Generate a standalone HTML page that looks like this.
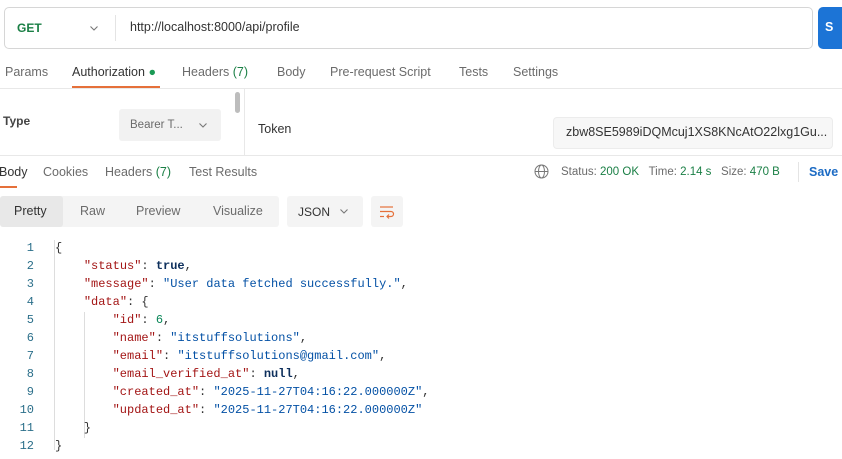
<!DOCTYPE html>
<html><head><meta charset="utf-8"><style>
*{margin:0;padding:0;box-sizing:border-box}
body{width:842px;height:459px;overflow:hidden;background:#fff;font-family:"Liberation Sans",sans-serif;font-size:12.5px;color:#212121;position:relative}
.a{position:absolute;white-space:nowrap}
.g{color:#6b6b6b}
.mono{font-family:"Liberation Mono",monospace;font-size:12px}
.k{color:#a31515}.s{color:#0451a5}.b{color:#0d2f5c;font-weight:bold}.n{color:#098658}
.ln{color:#2b6f8a;text-align:right;width:34px;left:0}
</style></head><body>
<div class="a" style="left:4px;top:7px;width:809px;height:42px;border:1px solid #d6d6d6;border-radius:5px"></div>
<div class="a" style="left:17px;top:21px;color:#1a7f45;font-weight:bold;font-size:12px">GET</div>
<svg class="a" style="left:89px;top:24px" width="10" height="8" viewBox="0 0 10 8" fill="none" stroke="#777" stroke-width="1.1"><path d="M1.5 2.5l3.5 3.5 3.5-3.5"/></svg>
<div class="a" style="left:115px;top:15px;width:1px;height:26px;background:#e4e4e4"></div>
<div class="a" style="left:130px;top:20px;color:#333">http://localhost:8000/api/profile</div>
<div class="a" style="left:818px;top:7px;width:40px;height:42px;background:#1c74d6;border-radius:5px;color:#fff;font-weight:bold;padding:13px 0 0 7px">S</div>
<div class="a g" style="left:5px;top:65px">Params</div>
<div class="a" style="left:72px;top:65px;color:#333">Authorization <span style="color:#1a9a55">●</span></div>
<div class="a" style="left:72px;top:86px;width:88px;height:2px;background:#e5703a"></div>
<div class="a g" style="left:182px;top:65px">Headers <span style="color:#1a7f45">(7)</span></div>
<div class="a g" style="left:277px;top:65px">Body</div>
<div class="a g" style="left:330px;top:65px">Pre-request Script</div>
<div class="a g" style="left:459px;top:65px">Tests</div>
<div class="a g" style="left:513px;top:65px">Settings</div>
<div class="a" style="left:0;top:88px;width:842px;height:1px;background:#e8e8e8"></div>
<div class="a" style="left:3px;top:114px;color:#444;font-weight:bold;font-size:12px">Type</div>
<div class="a" style="left:119px;top:109px;width:102px;height:32px;background:#f2f2f2;border-radius:3px"></div>
<div class="a g" style="left:130px;top:119px;font-size:11.5px">Bearer T...</div>
<svg class="a" style="left:198px;top:121px" width="10" height="8" viewBox="0 0 10 8" fill="none" stroke="#777" stroke-width="1.1"><path d="M1.5 2.5l3.5 3.5 3.5-3.5"/></svg>
<div class="a" style="left:235px;top:92px;width:5px;height:21px;background:#bdbdbd;border-radius:3px"></div>
<div class="a" style="left:244px;top:89px;width:1px;height:67px;background:#e8e8e8"></div>
<div class="a" style="left:258px;top:122px;color:#333">Token</div>
<div class="a" style="left:553px;top:117px;width:280px;height:32px;background:#f7f7f7;border:1px solid #ececec;border-radius:4px"></div>
<div class="a" style="left:566px;top:125px;color:#333">zbw8SE5989iDQMcuj1XS8KNcAtO22lxg1Gu...</div>
<div class="a" style="left:0;top:155px;width:842px;height:1px;background:#e8e8e8"></div>
<div class="a" style="left:-1px;top:165px;color:#333">Body</div>
<div class="a" style="left:0;top:186px;width:17px;height:2px;background:#e5703a"></div>
<div class="a g" style="left:43px;top:165px">Cookies</div>
<div class="a g" style="left:105px;top:165px">Headers <span style="color:#1a7f45">(7)</span></div>
<div class="a g" style="left:189px;top:165px">Test Results</div>
<svg class="a" style="left:534px;top:164px" width="15" height="15" viewBox="0 0 15 15" fill="none" stroke="#777" stroke-width="1"><circle cx="7.5" cy="7.5" r="6.5"/><ellipse cx="7.5" cy="7.5" rx="3" ry="6.5"/><line x1="1" y1="7.5" x2="14" y2="7.5"/></svg>
<div class="a g" style="left:561px;top:166px;font-size:11.5px">Status: <span style="color:#1a7f45">200 OK</span> &nbsp;&nbsp;Time: <span style="color:#1a7f45">2.14 s</span> &nbsp;&nbsp;Size: <span style="color:#1a7f45">470 B</span></div>
<div class="a" style="left:798px;top:162px;width:1px;height:20px;background:#e4e4e4"></div>
<div class="a" style="left:809px;top:165px;color:#1c6bc4;font-weight:bold">Save R</div>
<div class="a" style="left:0;top:196px;width:279px;height:31px;background:#f4f4f4;border-radius:3px"></div>
<div class="a" style="left:0;top:196px;width:63px;height:31px;background:#e8e8e8;border-radius:3px"></div>
<div class="a" style="left:14px;top:204px;color:#333">Pretty</div>
<div class="a g" style="left:80px;top:204px">Raw</div>
<div class="a g" style="left:136px;top:204px">Preview</div>
<div class="a g" style="left:213px;top:204px">Visualize</div>
<div class="a" style="left:287px;top:196px;width:76px;height:31px;background:#f4f4f4;border-radius:3px"></div>
<div class="a" style="left:298px;top:205px;color:#333;font-size:12px">JSON</div>
<svg class="a" style="left:339px;top:207px" width="10" height="8" viewBox="0 0 10 8" fill="none" stroke="#777" stroke-width="1.1"><path d="M1.5 2.5l3.5 3.5 3.5-3.5"/></svg>
<div class="a" style="left:371px;top:196px;width:32px;height:31px;background:#f4f4f4;border-radius:3px"></div>
<svg class="a" style="left:379px;top:204px" width="16" height="16" viewBox="0 0 16 16" fill="none" stroke="#e5703a" stroke-width="1.2"><line x1="1" y1="3" x2="14" y2="3"/><path d="M1 7.5h11a2.5 2.5 0 0 1 0 5H8"/><path d="M10 10.5l-2 2 2 2"/><line x1="1" y1="12.5" x2="5" y2="12.5"/></svg>
<div class="a" style="left:54px;top:240px;width:1px;height:210px;background:#ddd"></div>
<div class="a" style="left:84px;top:312px;width:1px;height:126px;background:#ddd"></div>
<div class="a mono ln" style="top:239px;line-height:18px">1<br>2<br>3<br>4<br>5<br>6<br>7<br>8<br>9<br>10<br>11<br>12</div>
<div class="a mono" style="left:55px;top:239px;line-height:18px;color:#333;white-space:pre">{
    <span class="k">"status"</span>: <span class="b">true</span>,
    <span class="k">"message"</span>: <span class="s">"User data fetched successfully."</span>,
    <span class="k">"data"</span>: {
        <span class="k">"id"</span>: <span class="n">6</span>,
        <span class="k">"name"</span>: <span class="s">"itstuffsolutions"</span>,
        <span class="k">"email"</span>: <span class="s">"itstuffsolutions@gmail.com"</span>,
        <span class="k">"email_verified_at"</span>: <span class="b">null</span>,
        <span class="k">"created_at"</span>: <span class="s">"2025-11-27T04:16:22.000000Z"</span>,
        <span class="k">"updated_at"</span>: <span class="s">"2025-11-27T04:16:22.000000Z"</span>
    }
}</div>
</body></html>
